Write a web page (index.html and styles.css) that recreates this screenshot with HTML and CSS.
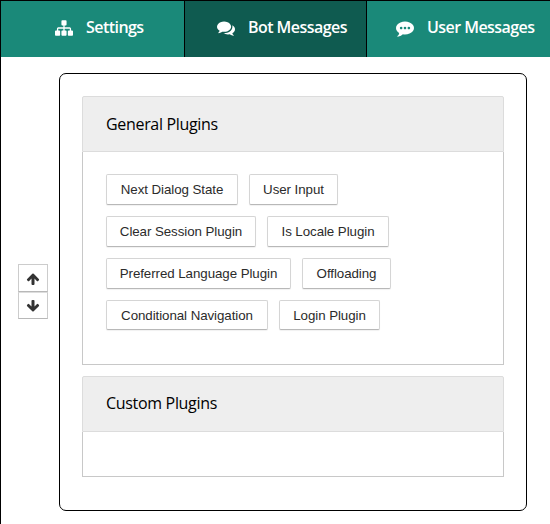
FILE: index.html
```
<!DOCTYPE html>
<html lang="en">
<head>
<meta charset="utf-8">
<title>Plugins</title>
<link rel="stylesheet" href="styles.css">
</head>
<body>
<div class="app">
  <nav class="tabs">
    <a class="tab tab-settings">
      <svg class="tab-icon" viewBox="0 0 1792 1792"><path d="M1792 1248v320q0 40-28 68t-68 28h-320q-40 0-68-28t-28-68v-320q0-40 28-68t68-28h96v-192h-512v192h96q40 0 68 28t28 68v320q0 40-28 68t-68 28h-320q-40 0-68-28t-28-68v-320q0-40 28-68t68-28h96v-192h-512v192h96q40 0 68 28t28 68v320q0 40-28 68t-68 28h-320q-40 0-68-28t-28-68v-320q0-40 28-68t68-28h96v-192q0-52 38-90t90-38h512v-192h-96q-40 0-68-28t-28-68v-320q0-40 28-68t68-28h320q40 0 68 28t28 68v320q0 40-28 68t-68 28h-96v192h512q52 0 90 38t38 90v192h96q40 0 68 28t28 68z"/></svg>
      <span>Settings</span>
    </a>
    <a class="tab tab-bot active">
      <svg class="tab-icon" viewBox="0 0 1792 1792"><path d="M1408 768q0 139-94 257t-256.500 186.500-353.500 68.500q-86 0-176-16-124 88-278 128-36 9-86 16h-3q-11 0-20.500-8t-11.500-21q-1-3-1-6.500t.5-6.500 2-6l2.500-5 3.500-5.500 4-5 4.500-5 4-4.500q5-6 23-25t26-29.500 22.500-29 25-38.500 20.500-44q-124-72-195-177t-71-224q0-139 94-257t256.500-186.500 353.500-68.500 353.500 68.500 256.500 186.500 94 257zm384 256q0 120-71 224.500t-195 176.500q10 24 20.500 44t25 38.500 22.500 29 26 29.500 23 25q1 1 4 4.500t4.500 5 4 5 3.500 5.500l2.500 5 2 6 .5 6.500-1 6.500q-3 14-13 22t-22 7q-50-7-86-16-154-40-278-128-90 16-176 16-271 0-472-132 58 4 88 4 161 0 309-45t264-129q125-92 192-212t67-254q0-77-23-152 129 71 204 178t75 230z"/></svg>
      <span>Bot Messages</span>
    </a>
    <a class="tab tab-user">
      <svg class="tab-icon" viewBox="0 0 1792 1792"><path d="M640 896q0-53-37.500-90.500t-90.500-37.500-90.500 37.500-37.500 90.500 37.500 90.500 90.500 37.500 90.500-37.500 37.500-90.500zm384 0q0-53-37.500-90.500t-90.500-37.500-90.500 37.500-37.500 90.500 37.500 90.500 90.500 37.500 90.500-37.500 37.500-90.500zm384 0q0-53-37.500-90.500t-90.500-37.500-90.500 37.500-37.500 90.500 37.500 90.500 90.500 37.500 90.500-37.500 37.500-90.500zm384 0q0 174-120 321.500t-326 233-450 85.500q-110 0-211-18-173 173-435 229-52 10-86 13-12 1-22-6t-13-18q-4-15 20-37 5-5 23.500-21.500t25.500-23.500 23.500-25.500 24-31.500 20.500-37 20-48 14.500-57.500 12.500-72.500q-146-90-229.500-216.500t-83.500-269.500q0-174 120-321.500t326-233 450-85.500 450 85.500 326 233 120 321.500z"/></svg>
      <span>User Messages</span>
    </a>
  </nav>
  <main class="content">
    <div class="mover">
      <button class="move"><svg class="arrow" viewBox="0 0 1792 1792"><path d="M1675 971q0 51-37 90l-75 75q-38 38-91 38-54 0-90-38l-294-293v704q0 52-37.500 84.500t-90.500 32.500h-128q-53 0-90.500-32.500t-37.500-84.500v-704l-294 293q-36 38-90 38t-90-38l-75-75q-38-38-38-90 0-53 38-91l651-651q35-37 90-37 54 0 91 37l651 651q37 39 37 91z"/></svg></button>
      <button class="move move-down"><svg class="arrow down" viewBox="0 0 1792 1792"><path d="M1675 971q0 51-37 90l-75 75q-38 38-91 38-54 0-90-38l-294-293v704q0 52-37.500 84.500t-90.500 32.500h-128q-53 0-90.500-32.500t-37.500-84.500v-704l-294 293q-36 38-90 38t-90-38l-75-75q-38-38-38-90 0-53 38-91l651-651q35-37 90-37 54 0 91 37l651 651q37 39 37 91z"/></svg></button>
    </div>
    <div class="panel">
      <section class="card">
        <h2 class="card-head">General Plugins</h2>
        <div class="card-body general">
          <div class="row"><button class="plugin w132">Next Dialog State</button><button class="plugin w89">User Input</button></div>
          <div class="row"><button class="plugin w150">Clear Session Plugin</button><button class="plugin w122">Is Locale Plugin</button></div>
          <div class="row"><button class="plugin w185">Preferred Language Plugin</button><button class="plugin w89">Offloading</button></div>
          <div class="row last"><button class="plugin w162">Conditional Navigation</button><button class="plugin w101">Login Plugin</button></div>
        </div>
      </section>
      <section class="card">
        <h2 class="card-head card-head-custom">Custom Plugins</h2>
        <div class="card-body custom"></div>
      </section>
    </div>
  </main>
</div>
</body>
</html>
```
FILE: styles.css
```
* { box-sizing: border-box; }

body {
  margin: 0;
  background: #fff;
  font-family: "Open Sans", sans-serif;
}

.app {
  height: 524px;
  border-top: 1px solid #000;
  border-left: 1px solid #000;
  overflow: hidden;
}

.tabs {
  display: grid;
  grid-template-columns: 183px 183px 183px;
  height: 56px;
}

.tab {
  display: flex;
  align-items: center;
  gap: 13px;
  padding-bottom: 4px;
  background: #1a8979;
  color: #fff;
  font-size: 16px;
  font-weight: 600;
  letter-spacing: -0.55px;
  white-space: nowrap;
}

.tab-settings { padding-left: 54px; }
.tab-bot { padding-left: 32px; }
.tab-user { padding-left: 29px; }

.tab.active {
  background: #0f5b50;
  border-left: 1px solid #000;
  border-right: 1px solid #000;
}

.tab-icon {
  width: 18px;
  height: 18px;
  flex: none;
  fill: #fff;
  margin-top: 2px;
}

.content {
  display: flex;
  align-items: flex-start;
  padding: 16px 0 0 17px;
}

.mover {
  width: 30px;
  margin: 191px 11px 0 0;
  display: flex;
  flex-direction: column;
}

.move {
  display: flex;
  align-items: center;
  justify-content: center;
  height: 28px;
  padding: 2px 0 0;
  background: #fff;
  border: 1px solid #ccc;
  border-bottom-color: #b8b8b8;
}

.move-down { height: 27px; padding-top: 1px; border-top-color: #ddd; }

.arrow { width: 14px; height: 14px; fill: #333; }
.arrow.down { transform: rotate(180deg); }

.panel {
  width: 468px;
  height: 438px;
  padding: 22px;
  border: 1px solid #000;
  border-radius: 7px;
  display: flex;
  flex-direction: column;
  gap: 11px;
}

.card-head {
  margin: 0;
  height: 56px;
  padding-left: 23px;
  border: 1px solid #dcdcdc;
  border-radius: 2px 2px 0 0;
  background: #eee;
  color: #000;
  font-size: 16px;
  font-weight: 400;
  letter-spacing: -0.32px;
  line-height: 54px;
}

.card-head-custom { line-height: 52px; }

.card-body {
  border: 1px solid #c8c8c8;
  border-top: 0;
}

.general {
  height: 213px;
  padding: 22px 23px 0;
  display: flex;
  flex-direction: column;
  gap: 11px;
}

.custom { height: 45px; }

.row { display: flex; gap: 11px; height: 31px; }
.row.last { height: 30px; }

.plugin {
  padding: 0;
  background: #fff;
  border: 1px solid #d5d5d5;
  border-bottom-color: #b8b8b8;
  border-radius: 2px;
  box-shadow: 0 1px 1px rgba(0, 0, 0, 0.06);
  color: #2b2b2b;
  font-family: "Liberation Sans", sans-serif;
  font-size: 13.33px;
  letter-spacing: -0.07px;
  white-space: nowrap;
}

.w89 { width: 89px; }
.w101 { width: 101px; }
.w122 { width: 122px; }
.w132 { width: 132px; }
.w150 { width: 150px; }
.w162 { width: 162px; }
.w185 { width: 185px; }
```
